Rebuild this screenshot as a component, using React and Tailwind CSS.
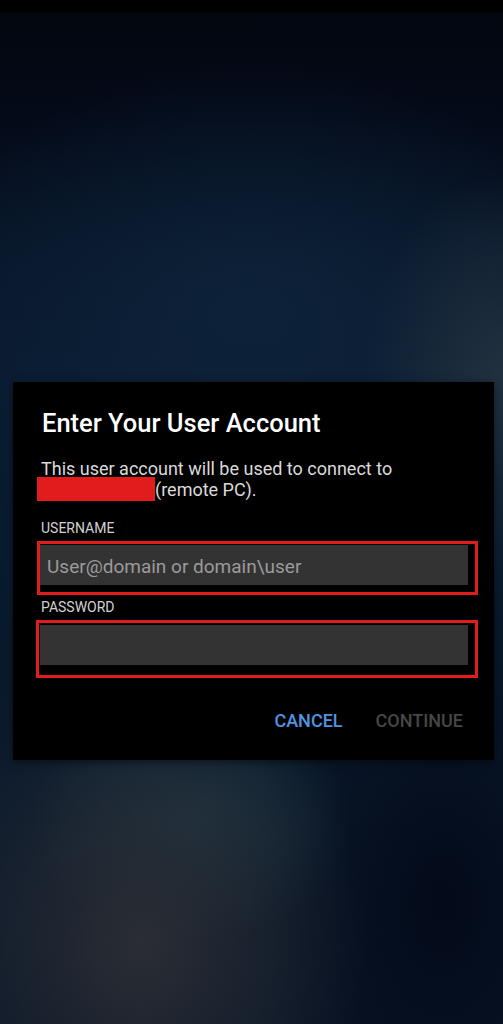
import React from 'react';

const font = { fontFamily: 'Roboto, "Noto Sans", sans-serif' };

const Field = ({ placeholder, box }) => {
    return (
        <div className="relative h-[40px] w-full bg-[#333333]">
            <input
                type="text"
                placeholder={placeholder}
                className="h-full w-full bg-transparent pl-[7px] pt-[3px] text-[19px] text-[#e8e8e8] outline-none placeholder:text-[#9b9b9b]"
            />
            {/* red highlight drawn on the screenshot */}
            <div className={box}></div>
        </div>
    );
};

const App = () => {
    return (
        <div
            style={font}
            className="flex h-[1024px] w-full flex-col overflow-hidden bg-[radial-gradient(ellipse_45%_26%_at_28%_92%,#2a2d34_0%,transparent_100%),radial-gradient(ellipse_32%_12%_at_38%_80%,#1b3240_0%,transparent_100%),radial-gradient(ellipse_40%_32%_at_88%_88%,#030a1a_0%,transparent_100%),radial-gradient(ellipse_28%_20%_at_100%_37%,#22313f_0%,transparent_100%),radial-gradient(ellipse_70%_25%_at_50%_31%,#0d2239_0%,transparent_100%),linear-gradient(180deg,#02060e_0%,#040a18_12%,#081629_25%,#0a1b31_38%,#0a1a2e_60%,#0b1a2c_78%,#0a1628_100%)]"
        >
            <div className="h-[12px] w-full bg-black"></div>

            <div className="ml-[13px] mt-[370px] w-[481px] bg-black pb-[29px] pl-[27px] pr-[26px] pt-[27px] shadow-[0_2px_8px_rgba(0,0,0,0.5)]">
                <h2 className="pl-[2px] text-[25.5px] font-medium leading-[28px] text-white">Enter Your User Account</h2>

                <p className="mt-[21px] pl-[1px] text-[18px] leading-[21px] text-[#dadada]">
                    This user account will be used to connect to
                    <br />
                    <span className="-mb-[1px] -ml-[4px] -mt-[2px] inline-block h-[24px] w-[118px] bg-[#e21c1c] align-top"></span>
                    (remote PC).
                </p>

                <div className="mt-[19px] pl-[1px] text-[14px] leading-[18px] text-[#d2d2d2]">USERNAME</div>
                <div className="mt-[8px]">
                    <Field
                        placeholder="User@domain or domain\user"
                        box="pointer-events-none absolute -left-[3px] -top-[4px] -right-[10px] -bottom-[10px] border-[3px] border-[#e21c1c]"
                    />
                </div>

                <div className="mt-[13px] pl-[1px] text-[14px] leading-[18px] text-[#d2d2d2]">PASSWORD</div>
                <div className="mt-[9px]">
                    <Field
                        placeholder=""
                        box="pointer-events-none absolute -left-[4px] -top-[5px] -right-[10px] -bottom-[13px] border-[3px] border-[#e21c1c]"
                    />
                </div>

                <div className="mt-[46px] flex justify-end gap-[33px] pr-[5px]">
                    <button className="text-[18px] font-medium leading-[20px] text-[#4f95e0]">CANCEL</button>
                    <button className="text-[18px] font-medium leading-[20px] text-[#474747]">CONTINUE</button>
                </div>
            </div>
        </div>
    );
};

export default App;
